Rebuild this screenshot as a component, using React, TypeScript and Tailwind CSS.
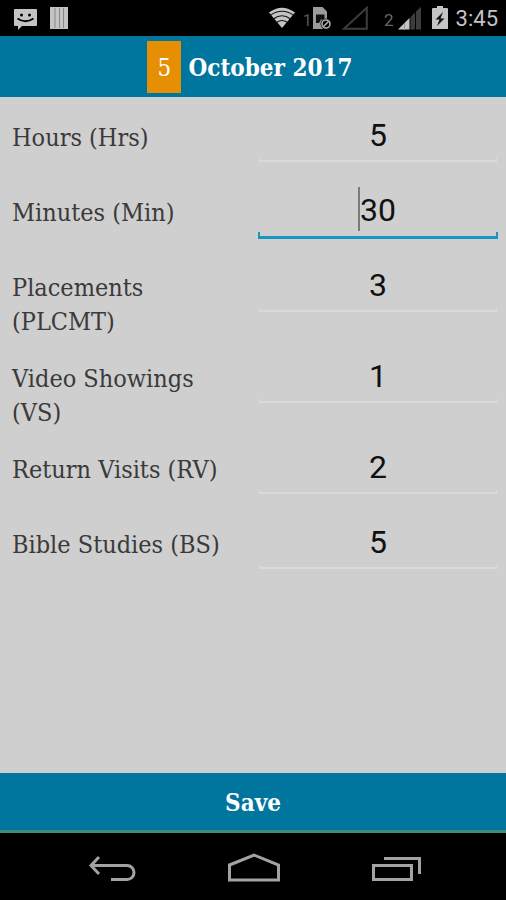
import { useState } from 'react';

type FieldKey = 'hours' | 'minutes' | 'placements' | 'videos' | 'visits' | 'studies';

const FIELDS: { key: FieldKey; label: string }[] = [
  { key: 'hours', label: 'Hours (Hrs)' },
  { key: 'minutes', label: 'Minutes (Min)' },
  { key: 'placements', label: 'Placements (PLCMT)' },
  { key: 'videos', label: 'Video Showings (VS)' },
  { key: 'visits', label: 'Return Visits (RV)' },
  { key: 'studies', label: 'Bible Studies (BS)' },
];

function StatusBar() {
  return (
    <div className="flex h-9 shrink-0 items-center justify-between bg-black pl-3.5 pr-2 font-[Roboto,sans-serif] text-[#c4c4c4]">
      <div className="flex items-center gap-3">
        {/* Message */}
        <svg width="24" height="24" viewBox="0 0 24 24">
          <path d="M1 3h21a1 1 0 0 1 1 1v15a1 1 0 0 1-1 1H8l-4 4v-4H1a1 1 0 0 1-1-1V4a1 1 0 0 1 1-1z" fill="currentColor" />
          <path d="M3.500 12.500q8 5.500 16 0" fill="none" stroke="#000" strokeWidth="1.800" />
          <circle cx="7.500" cy="9" r="1.500" />
          <circle cx="15.500" cy="9" r="1.500" />
        </svg>
        <svg width="18" height="22" viewBox="0 0 18 22">
          <path d="M0 0h18v22H0z" fill="currentColor" />
          <path d="M5 1v20M9.500 1v20M13.500 1v20" stroke="#888" strokeWidth="1" />
        </svg>
      </div>

      <div className="flex items-center">
        {/* Wifi */}
        <svg width="28" height="22" viewBox="0 0 28 22" className="mr-1.5">
          <path d="M1 5.500Q14-4 27 5.500L14 21z" fill="currentColor" />
          <path d="M2 8.500Q14 0 26 8.500M5.500 12Q14 5.500 22.500 12M8.500 15.500Q14 11.500 19.500 15.500" fill="none" stroke="#111" strokeWidth="1.200" />
        </svg>
        <span className="mt-1 text-[17px] leading-5 text-[#555]">1</span>
        {/* Sim card, off */}
        <svg width="20" height="24" viewBox="0 0 20 24" className="mr-2.5">
          <path d="M1 1h9.500l4.500 4.500V23H1z" fill="#9c9c9c" />
          <path d="M4 8.500h8.500v5H9L7 17H4z" fill="#111" />
          <circle cx="14" cy="18" r="5.500" fill="#000" />
          <circle cx="14" cy="18" r="4" fill="none" stroke="#b0b0b0" strokeWidth="1.600" />
          <path d="m11.500 20.500 5-5" stroke="#b0b0b0" strokeWidth="1.600" />
        </svg>
        <svg width="26" height="24" viewBox="0 0 26 24" className="mr-4">
          <path d="M2 22.800 24.800 1.800v21z" fill="none" stroke="#3c3c3c" strokeWidth="2" />
        </svg>
        <span className="mt-1 text-[17px] leading-5 text-[#666]">2</span>
        {/* Signal strength */}
        <svg width="24" height="24" viewBox="0 0 24 24" className="ml-1 mr-2.5">
          <path d="M0 23.500 11.500 12v11.500z" fill="currentColor" />
          <path d="M6.500 17v7" stroke="#999" strokeWidth="1" />
          <path d="M12.500 11 17 6.500v17h-4.500zM18 5.500 23 .8v22.700h-5z" fill="#3c3c3c" />
        </svg>
        {/* Battery */}
        <svg width="16" height="24" viewBox="0 0 16 24" className="mr-2">
          <path d="M5 0h6v2h4a1 1 0 0 1 1 1v20H0V3a1 1 0 0 1 1-1h4z" fill="currentColor" />
          <path d="m11 6-7.500 7.500h4L5 20l7.500-7.500h-4z" fill="#111" />
        </svg>
        <span className="mt-0.5 text-[22px] leading-9">3:45</span>
      </div>
    </div>
  );
}

function NavBar() {
  return (
    <nav className="flex h-[67px] shrink-0 items-center justify-between bg-black pl-[86px] pr-[84px] text-[#a3a3a3]">
      <button type="button" aria-label="Back" className="pt-1">
        <svg width="52" height="28" viewBox="0 0 52 28" fill="none" stroke="currentColor" strokeWidth="3">
          <path d="M13 2 5 10.500 13 19M5 10.500h36a7 7 0 0 1 0 14H25" />
        </svg>
      </button>
      <button type="button" aria-label="Home" className="pt-0.5">
        <svg width="54" height="30" viewBox="0 0 54 30" fill="none" stroke="currentColor" strokeWidth="3">
          <path d="M2.500 12 27 2l24.500 10v15h-49z" />
        </svg>
      </button>
      <button type="button" aria-label="Recent apps" className="pt-1">
        <svg width="52" height="28" viewBox="0 0 52 28" fill="none" stroke="currentColor" strokeWidth="3">
          <path d="M3.500 10.500h38v14h-38zM14 3.500h35.500V19" />
        </svg>
      </button>
    </nav>
  );
}

export default function App() {
  const [active, setActive] = useState<FieldKey>('minutes');
  const [values, setValues] = useState<Record<FieldKey, string>>({
    hours: '5',
    minutes: '30',
    placements: '3',
    videos: '1',
    visits: '2',
    studies: '5',
  });

  return (
    <div className="flex min-h-screen flex-col bg-[#cfcfcf] font-['DejaVu_Serif_Condensed','DejaVu_Serif',serif]">
      <StatusBar />

      <header className="flex h-[61px] shrink-0 items-center justify-center gap-[7px] bg-[#00759d] pr-1.5 text-white">
        <span className="flex h-[52px] w-[34px] items-center justify-center bg-[#e68f04] pt-0.5 text-2xl">5</span>
        <h1 className="pt-0.5 text-2xl font-bold">October 2017</h1>
      </header>

      <form id="report" className="grow pt-[13px]" onSubmit={(e) => e.preventDefault()}>
        {FIELDS.map(({ key, label }) => (
          <div key={key} className="flex min-h-[75px] items-start pl-3 pr-2">
            <label htmlFor={key} className="flex-1 pt-[11px] pb-3 pr-8 text-[25px] leading-[34px] text-[#3a3a3a]">
              {label}
            </label>
            <div className="relative w-[49.4%]">
              <input
                id={key}
                type="text"
                inputMode="numeric"
                value={values[key]}
                onFocus={() => setActive(key)}
                onChange={(e) => setValues({ ...values, [key]: e.target.value })}
                className="block h-12 w-full bg-transparent pt-0.5 text-center font-[Roboto,sans-serif] text-[32px] leading-[44px] text-[#111] caret-transparent outline-none"
              />
              {/* Underline with short ticks at both ends */}
              {active === key ? (
                <div className="-mt-px h-[7px] border-x-2 border-b-[3px] border-[#1a94c0]" />
              ) : (
                <div className="mx-px h-1 border-x border-b-2 border-[#dadada]" />
              )}
              {active === key && (
                <span className="absolute left-1/2 top-0.5 -ml-5 h-11 w-0.5 bg-[#7a7a7a]" />
              )}
            </div>
          </div>
        ))}
      </form>

      <button
        type="submit"
        form="report"
        className="h-[60px] shrink-0 border-b-[3px] border-[#3b8d76] bg-[#00759d] pt-0.5 text-2xl font-bold text-white"
      >
        Save
      </button>
      <NavBar />
    </div>
  );
}
